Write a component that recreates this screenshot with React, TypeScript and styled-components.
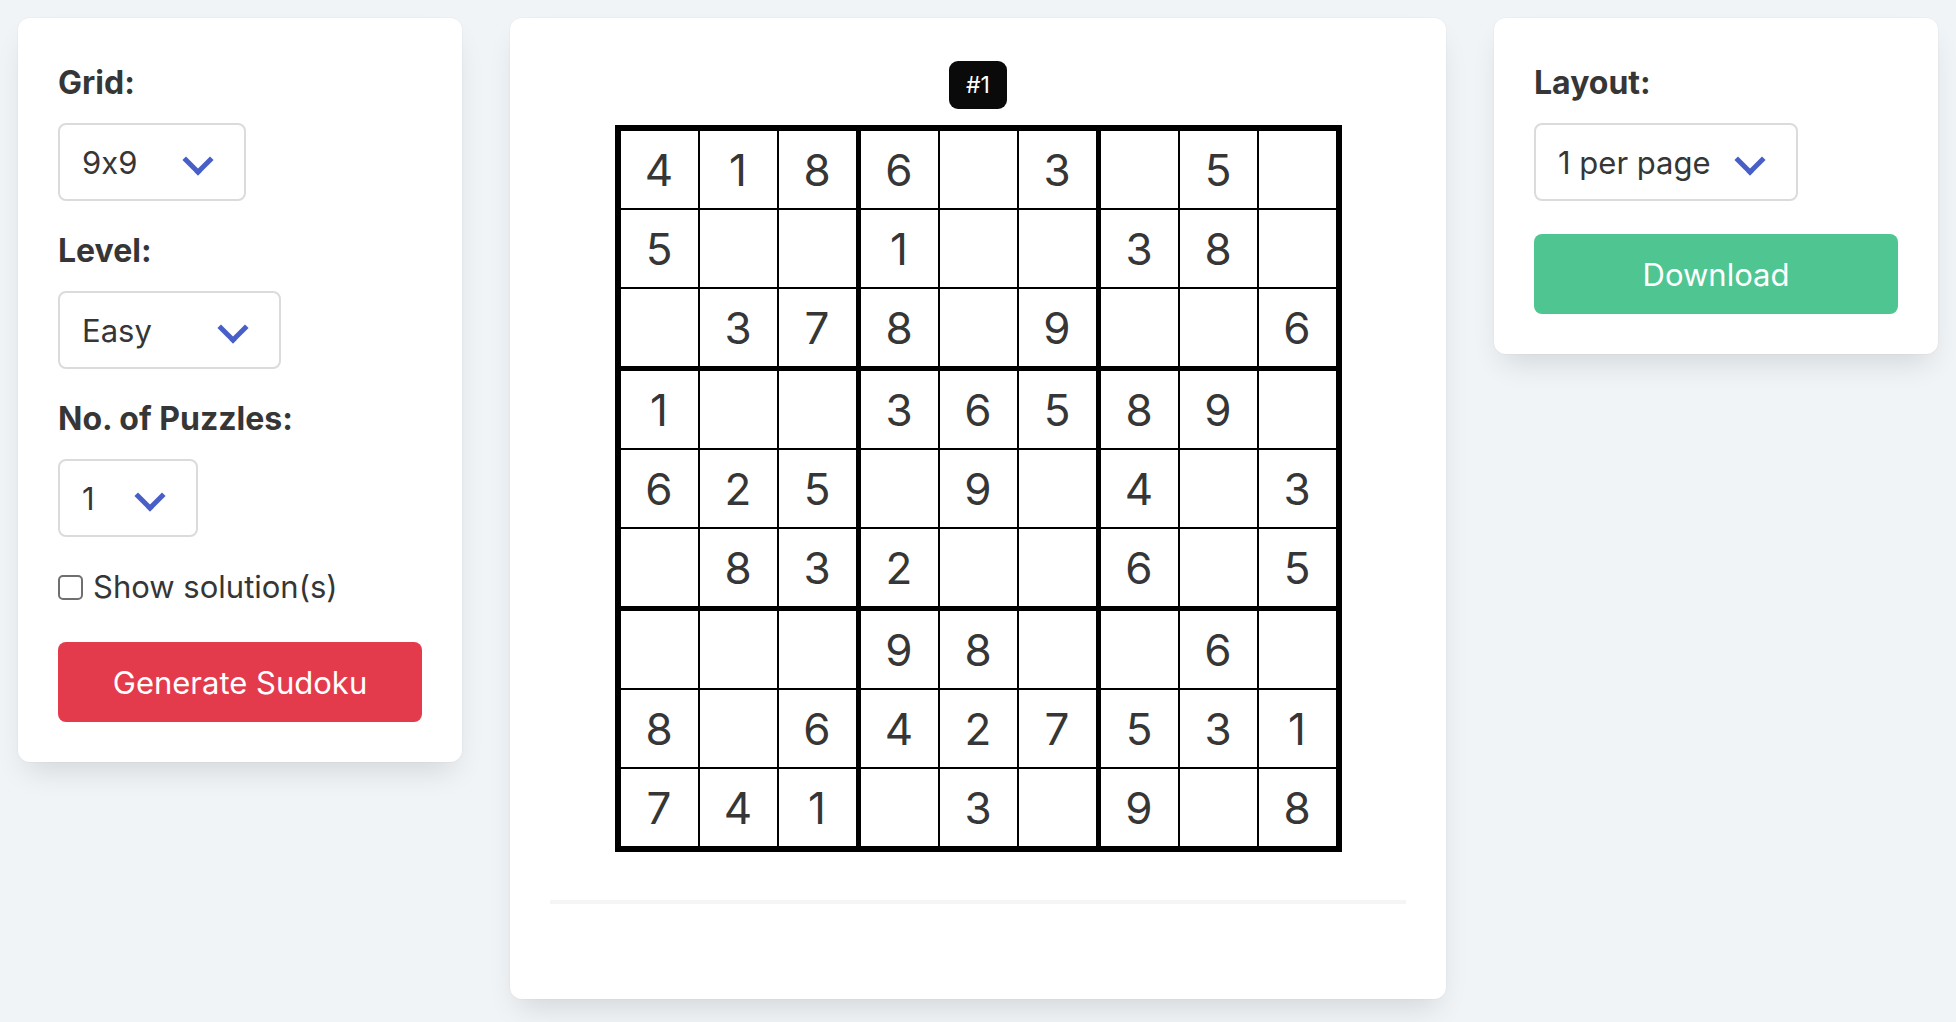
import styled, { createGlobalStyle } from 'styled-components'

const GlobalStyle = createGlobalStyle`
  html, body {
    margin: 0;
    padding: 0;
    background: #f0f4f7;
  }
  body {
    font-family: Inter, "Noto Sans", "Liberation Sans", sans-serif;
    color: #363636;
  }
  * {
    box-sizing: border-box;
  }
`

const Page = styled.div`
  display: grid;
  grid-template-columns: 444px 1fr 444px;
  gap: 48px;
  align-items: start;
  padding: 18px;
  min-height: 100vh;
`

const Card = styled.div`
  background: #fff;
  border-radius: 12px;
  box-shadow: 0 16px 30px -8px rgba(10, 10, 10, 0.12), 0 0 0 1px rgba(10, 10, 10, 0.02);
  padding: 41px 40px 40px;
  display: flex;
  flex-direction: column;
`

const PreviewCard = styled(Card)`
  padding: 43px 40px 95px;
  align-items: center;
`

const Field = styled.div`
  display: flex;
  flex-direction: column;
  align-items: flex-start;
  margin-bottom: 26px;
`

const Label = styled.label`
  font-size: 32px;
  font-weight: 700;
  line-height: 48px;
  color: #363636;
  margin-bottom: 16px;
`

const SelectWrap = styled.div<{ $width: number }>`
  position: relative;
  width: ${({ $width }) => $width}px;
  height: 78px;

  &::after {
    content: '';
    position: absolute;
    right: 37px;
    top: 50%;
    width: 17px;
    height: 17px;
    margin-top: -13px;
    border: 5px solid #485fc7;
    border-top: 0;
    border-right: 0;
    transform: rotate(-45deg);
    pointer-events: none;
  }
`

const Select = styled.select`
  appearance: none;
  width: 100%;
  height: 100%;
  border: 2px solid #dbdbdb;
  border-radius: 8px;
  background: #fff;
  padding: 0 60px 0 22px;
  font-family: inherit;
  font-feature-settings: 'calt' 0;
  font-size: 31px;
  color: #363636;
  outline: none;
`

const CheckRow = styled.label`
  display: flex;
  align-items: center;
  gap: 10px;
  font-size: 31px;
  line-height: 46px;
  color: #363636;
  margin-top: 1px;
  margin-bottom: 32px;
`

const Checkbox = styled.input`
  appearance: none;
  margin: 0;
  width: 25px;
  height: 25px;
  border: 2px solid #6f6f6f;
  border-radius: 5px;
  background: #fff;
`

const Button = styled.button<{ $color: string; $offset?: number }>`
  width: 100%;
  height: 80px;
  margin-top: ${({ $offset }) => $offset ?? 0}px;
  border: 0;
  border-radius: 8px;
  background: ${({ $color }) => $color};
  color: #fff;
  font-family: inherit;
  font-size: 31px;
  cursor: pointer;
`

const Tag = styled.span`
  display: inline-flex;
  align-items: center;
  justify-content: center;
  height: 48px;
  padding: 0 17px;
  border-radius: 9px;
  background: #0a0a0a;
  color: #fff;
  font-size: 23px;
  margin-bottom: 16px;
`

const Board = styled.div`
  display: grid;
  grid-template-columns: repeat(3, auto);
  gap: 5px;
  border: 6px solid #000;
  background: #000;
`

const Box = styled.div`
  display: grid;
  grid-template-columns: repeat(3, 77px);
  grid-auto-rows: 77px;
  gap: 2px;
`

const Cell = styled.div`
  background: #fff;
  display: flex;
  align-items: center;
  justify-content: center;
  font-size: 44px;
  line-height: 1;
  color: #363636;
`

const Divider = styled.hr`
  align-self: stretch;
  border: 0;
  height: 4px;
  background: #f5f5f5;
  margin: 48px 0 0;
`

const PUZZLE = [
  '418603050',
  '500100380',
  '037809006',
  '100365890',
  '625090403',
  '083200605',
  '000980060',
  '806427531',
  '741030908',
]

function boxCells(b: number) {
  const br = Math.floor(b / 3) * 3
  const bc = (b % 3) * 3
  const out: string[] = []
  for (let r = 0; r < 3; r++) {
    for (let c = 0; c < 3; c++) {
      const v = PUZZLE[br + r][bc + c]
      out.push(v === '0' ? '' : v)
    }
  }
  return out
}

export default function App() {
  return (
    <>
      <GlobalStyle />
      <Page>
        <Card>
          <Field>
            <Label>Grid:</Label>
            <SelectWrap $width={188}>
              <Select defaultValue="9x9">
                <option>9x9</option>
              </Select>
            </SelectWrap>
          </Field>
          <Field>
            <Label>Level:</Label>
            <SelectWrap $width={223}>
              <Select defaultValue="Easy">
                <option>Easy</option>
                <option>Medium</option>
                <option>Hard</option>
              </Select>
            </SelectWrap>
          </Field>
          <Field>
            <Label>No. of Puzzles:</Label>
            <SelectWrap $width={140}>
              <Select defaultValue="1">
                <option>1</option>
                <option>2</option>
                <option>4</option>
              </Select>
            </SelectWrap>
          </Field>
          <CheckRow>
            <Checkbox type="checkbox" />
            Show solution(s)
          </CheckRow>
          <Button $color="#e43b4c">Generate Sudoku</Button>
        </Card>

        <PreviewCard>
          <Tag>#1</Tag>
          <Board>
            {Array.from({ length: 9 }, (_, b) => (
              <Box key={b}>
                {boxCells(b).map((v, i) => (
                  <Cell key={i}>{v}</Cell>
                ))}
              </Box>
            ))}
          </Board>
          <Divider />
        </PreviewCard>

        <Card>
          <Field>
            <Label>Layout:</Label>
            <SelectWrap $width={264}>
              <Select defaultValue="1 per page">
                <option>1 per page</option>
                <option>2 per page</option>
                <option>4 per page</option>
              </Select>
            </SelectWrap>
          </Field>
          <Button $color="#4fc692" $offset={7}>Download</Button>
        </Card>
      </Page>
    </>
  )
}
